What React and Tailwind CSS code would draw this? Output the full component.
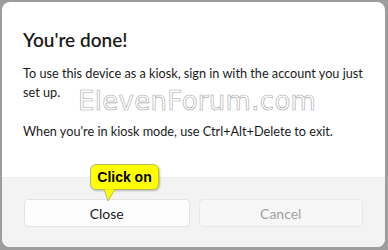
export default function App() {
  return (
    <div className="w-[388px] h-[250px] bg-[#9d9d9d] overflow-hidden relative font-['Lato',sans-serif]">
      <div className="absolute left-[2px] top-[2px] w-[383px] h-[245px] bg-white rounded-[8px] overflow-hidden flex flex-col">
        <div className="flex-1 px-[21px] pt-[26px] text-[#1b1b1b]">
          <h1 className="text-[19px] font-semibold leading-[24px]">You're done!</h1>
          <p className="mt-[12px] text-[12.7px] leading-[19px] whitespace-nowrap">
            To use this device as a kiosk, sign in with the account you just
            <br />
            set up.
          </p>
          <p className="mt-[20px] text-[12.7px] leading-[19px] whitespace-nowrap">
            When you're in kiosk mode, use Ctrl+Alt+Delete to exit.
          </p>
        </div>
        <div className="h-[70px] bg-[#f3f3f3] border-t border-[#ebebeb] px-[22px] pt-[21px] flex gap-[9px]">
          <button className="w-[167px] h-[28px] bg-[#fdfdfd] border border-[#e3e3e3] rounded-[4px] text-[14px] text-[#1b1b1b]">
            Close
          </button>
          <button className="w-[166px] h-[28px] bg-[#f7f7f7] border border-[#e8e8e8] rounded-[4px] text-[14px] text-[#a2a2a2]">
            Cancel
          </button>
        </div>
      </div>
      <div className="absolute left-[78px] top-[82px] text-[26px] tracking-[0.3px] text-white [-webkit-text-stroke:0.6px_#a8a8a8] font-['DejaVu_Sans',sans-serif]">
        ElevenForum.com
      </div>
      <div className="absolute left-[90px] top-[164px]">
        <div className="w-[69px] h-[26px] bg-[#ffff00] border border-[#bdbd55] rounded-[6px] flex items-center justify-center text-[14px] font-bold text-black font-['Liberation_Sans',sans-serif] shadow-[1px_1px_2px_rgba(0,0,0,0.25)]">
          Click on
        </div>
        <svg className="absolute left-[14px] top-[24px]" width="14" height="14" viewBox="0 0 14 14">
          <path d="M0 1 L4 13 L11 1 Z" fill="#ffff00" stroke="#bdbd55" strokeWidth="1" />
          <path d="M0.5 0 L11 0" stroke="#ffff00" strokeWidth="2.5" />
        </svg>
      </div>
    </div>
  );
}
